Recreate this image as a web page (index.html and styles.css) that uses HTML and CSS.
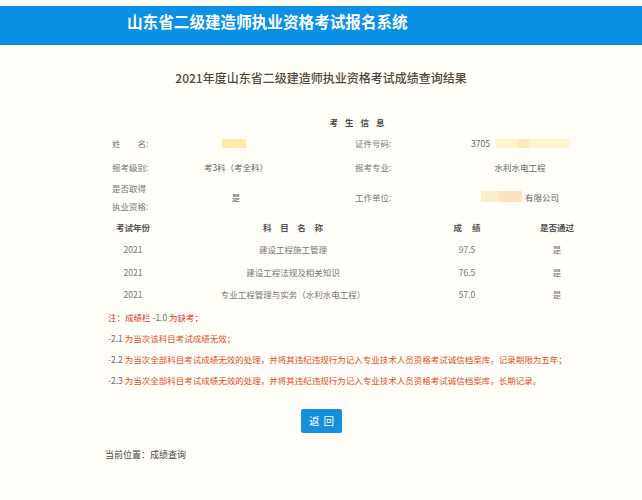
FILE: index.html
```html
<!DOCTYPE html>
<html lang="zh-CN">
<head>
<meta charset="utf-8">
<title>山东省二级建造师执业资格考试报名系统</title>
<link rel="stylesheet" href="styles.css">
</head>
<body>
<header class="topbar">
  <h1 class="site-title">山东省二级建造师执业资格考试报名系统</h1>
</header>

<h2 class="page-title">2021年度山东省二级建造师执业资格考试成绩查询结果</h2>

<section class="sheet">
  <div class="info-title">考生信息</div>
  <div class="info-grid">
    <div class="lbl row-name"><span class="wide">姓</span>名:</div>
    <div class="val row-name"><span class="mask mask-name"></span></div>
    <div class="lbl lbl2 row-name">证件号码:</div>
    <div class="val row-name">3705<span class="mask mask-id"></span></div>

    <div class="lbl row-level">报考级别:</div>
    <div class="val row-level">考3科（考全科）</div>
    <div class="lbl lbl2 row-level">报考专业:</div>
    <div class="val row-level">水利水电工程</div>

    <div class="lbl row-qual two-line">是否取得<br>执业资格:</div>
    <div class="val row-qual">是</div>
    <div class="lbl lbl2 row-qual">工作单位:</div>
    <div class="val row-qual"><span class="mask mask-co"></span>有限公司</div>
  </div>

  <div class="score-grid">
    <div class="th">考试年份</div>
    <div class="th spaced">科目名称</div>
    <div class="th spaced2">成绩</div>
    <div class="th">是否通过</div>

    <div class="td">2021</div>
    <div class="td">建设工程施工管理</div>
    <div class="td">97.5</div>
    <div class="td">是</div>

    <div class="td">2021</div>
    <div class="td">建设工程法规及相关知识</div>
    <div class="td">76.5</div>
    <div class="td">是</div>

    <div class="td">2021</div>
    <div class="td">专业工程管理与实务（水利水电工程）</div>
    <div class="td">57.0</div>
    <div class="td">是</div>
  </div>

  <div class="notes">
    <p><span class="red">注：</span><span class="red">成绩栏</span> <span class="num">-1.0</span> <span class="red">为缺考；</span></p>
    <p><span class="num">-2.1</span> <span class="org">为当次该科目考试成绩无效；</span></p>
    <p><span class="num">-2.2</span> <span class="org">为当次全部科目考试成绩无效的处理，并将其违纪违规行为记入专业技术人员资格考试诚信档案库，记录期限为五年；</span></p>
    <p><span class="num">-2.3</span> <span class="org">为当次全部科目考试成绩无效的处理，并将其违纪违规行为记入专业技术人员资格考试诚信档案库，长期记录。</span></p>
  </div>
</section>

<div class="actions">
  <button class="btn-back" type="button">返回</button>
</div>

<div class="crumb">当前位置：成绩查询</div>
</body>
</html>
```

FILE: styles.css
```css
html, body {
  margin: 0;
  padding: 0;
}
body {
  background: #fefdf8;
  font-family: "Noto Sans CJK SC", "Noto Sans", sans-serif;
  color: #666;
  width: 642px;
  height: 500px;
  overflow: hidden;
}

.topbar {
  margin-top: 6px;
  height: 38px;
  background: #0a90e6;
  border-bottom: 1px solid #2a78b0;
  box-sizing: content-box;
}
.site-title {
  margin: 0;
  padding: 4px 0 0 127px;
  font-size: 15.6px;
  line-height: 22px;
  font-weight: 700;
  color: #fff;
  letter-spacing: 0;
}

.page-title {
  margin: 25px 0 0;
  text-align: center;
  font-size: 12px;
  line-height: 16px;
  font-weight: 500;
  color: #50483a;
}

.sheet {
  margin: 26px 0 0 100px;
  width: 500px;
  font-size: 8.5px;
}

.info-title {
  height: 20px;
  line-height: 20px;
  text-align: center;
  font-weight: 700;
  color: #4a4a4a;
  letter-spacing: 7px;
  padding-left: 21px;
}

.info-grid {
  display: grid;
  grid-template-columns: 51px 170px 119px 160px;
  grid-template-rows: 22px 26px 33px;
}
.lbl {
  display: flex;
  align-items: center;
  padding-left: 12px;
  color: #777;
  white-space: nowrap;
}
.lbl2 {
  padding-left: 34px;
}
.lbl.two-line {
  line-height: 18px;
}
.wide {
  margin-right: 17px;
}
.val {
  display: flex;
  align-items: center;
  justify-content: center;
  color: #666;
}
.mask {
  display: inline-block;
  height: 9px;
  background: #fdf0c4;
}
.mask-name {
  width: 24px;
  margin-left: -5px;
  background: #fde9b0;
}
.mask-id {
  width: 73px;
  margin-left: 6px;
  background: linear-gradient(90deg, #fef3cf 0 30%, #fde9bc 30% 45%, #fef3cf 45% 100%);
}
.mask-co {
  width: 41px;
  height: 11px;
  margin-right: 3px;
  background: linear-gradient(90deg, #fdeecb 0 45%, #fde4c0 45% 100%);
}

.score-grid {
  margin-top: 3px;
  display: grid;
  grid-template-columns: 66px 254px 94px 86px;
  grid-auto-rows: 22.5px;
  grid-template-rows: 22px;
}
.th, .td {
  display: flex;
  align-items: center;
  justify-content: center;
  white-space: nowrap;
}
.th {
  font-weight: 700;
  color: #555;
}
.td {
  color: #777;
}
.spaced {
  letter-spacing: 8.7px;
  padding-left: 8.7px;
}
.spaced2 {
  letter-spacing: 10px;
  padding-left: 10px;
}

.notes {
  margin: 1px 0 0 8px;
  line-height: 21px;
}
.notes p {
  margin: 0;
  white-space: nowrap;
}
.red {
  color: #e0341c;
}
.org {
  color: #e05020;
}
.num {
  color: #6a6a6a;
}

.actions {
  margin-top: 18px;
  display: flex;
  justify-content: center;
}
.btn-back {
  width: 41px;
  height: 24px;
  margin-left: 1px;
  padding: 0;
  border: 0;
  border-radius: 2px;
  background: #168fdd;
  color: #fff;
  font-family: "Noto Sans CJK SC", sans-serif;
  font-size: 10.5px;
  letter-spacing: 4px;
  text-indent: 4px;
}

.crumb {
  margin: 15px 0 0 105px;
  font-size: 9px;
  line-height: 14px;
  color: #4a4a4a;
}
```
